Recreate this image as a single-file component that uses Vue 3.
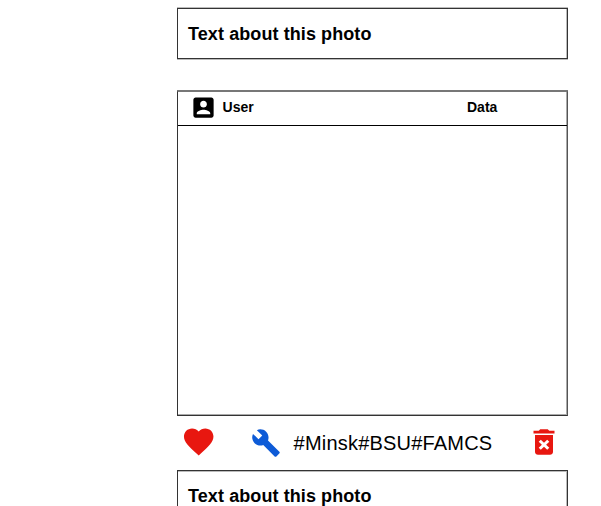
<script setup>
const caption = 'Text about this photo'
const tags = ['#Minsk', '#BSU', '#FAMCS']
</script>

<template>
  <main class="feed">
    <section class="caption first">{{ caption }}</section>

    <article class="post">
      <header class="head">
        <svg class="avatar" viewBox="0 0 24 24"><path d="M3 5v14c0 1.1.89 2 2 2h14c1.1 0 2-.9 2-2V5c0-1.1-.9-2-2-2H5c-1.11 0-2 .9-2 2zm12 4c0 1.66-1.34 3-3 3s-3-1.34-3-3 1.34-3 3-3 3 1.34 3 3zm-9 8c0-2 4-3.1 6-3.1s6 1.1 6 3.1v1H6v-1z" /></svg>
        <span class="user">User</span>
        <span class="date">Data</span>
      </header>
      <div class="photo"></div>
    </article>

    <div class="actions">
      <svg class="heart" viewBox="0 0 24 24"><path d="M12 21.35l-1.45-1.32C5.4 15.36 2 12.28 2 8.5 2 5.42 4.42 3 7.5 3c1.74 0 3.41.81 4.5 2.09C13.09 3.81 14.76 3 16.5 3 19.58 3 22 5.42 22 8.5c0 3.78-3.4 6.86-8.55 11.54L12 21.35z" /></svg>
      <svg class="wrench" viewBox="0 0 24 24"><path d="M22.7 19l-9.1-9.1c.9-2.3.4-5-1.5-6.9-2-2-5-2.4-7.4-1.3L9 6 6 9 1.6 4.7C.4 7.1.9 10.1 2.9 12.1c1.9 1.9 4.6 2.4 6.9 1.5l9.1 9.1c.4.4 1 .4 1.4 0l2.3-2.3c.5-.4.5-1.1.1-1.4z" /></svg>
      <span class="tags"><span v-for="tag in tags" :key="tag">{{ tag }}</span></span>
      <svg class="trash" viewBox="0 0 24 24" preserveAspectRatio="none"><path d="M6 19c0 1.1.9 2 2 2h8c1.1 0 2-.9 2-2V7H6v12zm2.46-7.12l1.41-1.41L12 12.59l2.12-2.12 1.41 1.41L13.41 14l2.12 2.12-1.41 1.41L12 15.41l-2.12 2.12-1.41-1.41L10.59 14l-2.13-2.12zM15.5 4l-1-1h-5l-1 1H5v2h14V4z" /></svg>
    </div>

    <section class="caption next">{{ caption }}</section>
  </main>
</template>

<style>
body { background: #fff; overflow: hidden; }
</style>

<style scoped>
.feed {
  box-sizing: border-box;
  width: 568px;
  height: 506px;
  padding: 8px 0 0 177px;
  overflow: hidden;
  font-family: "Liberation Sans", Arial, sans-serif;
  color: #000;
}
.caption {
  box-sizing: border-box;
  height: 51px;
  padding-left: 10px;
  border: 1px solid #333;
  font-size: 18px;
  font-weight: 700;
  line-height: 50px;
  letter-spacing: 0.09px;
}
.first { box-shadow: 0 -1px #bbb, 0 1px #bbb, inset -1px 0 #bbb; }
.next { box-shadow: inset -1px 1px #bbb; }
.post {
  box-sizing: border-box;
  height: 325px;
  margin-top: 32px;
  border: 1px solid #333;
  border-top-color: #777;
  border-right-color: #555;
  box-shadow: 0 -1px #777, inset -1px -1px #aaa;
}
.head {
  display: flex;
  align-items: flex-start;
  height: 33px;
  border-bottom: 1px solid #000;
  font-size: 14px;
  font-weight: 700;
}
.avatar { width: 27px; height: 27px; margin: 2px 0 0 11.6px; }
.user { width: 244.4px; margin-left: 6px; line-height: 30px; }
.date { line-height: 30px; }
.actions {
  display: flex;
  align-items: flex-start;
  height: 54px;
}
.actions svg { flex: none; }
.heart { width: 35.4px; height: 35.4px; margin: 8.2px 0 0 4px; fill: #e81710; }
.wrench { width: 30px; height: 30px; margin: 11.5px 0 0 34.2px; fill: #0d5bd7; }
.tags { width: 232px; margin: 15px 0 0 13px; font-size: 20px; line-height: 24px; letter-spacing: 0.2px; }
.trash { width: 36px; height: 34px; margin: 8.7px 0 0 0; fill: #e81710; }
</style>
